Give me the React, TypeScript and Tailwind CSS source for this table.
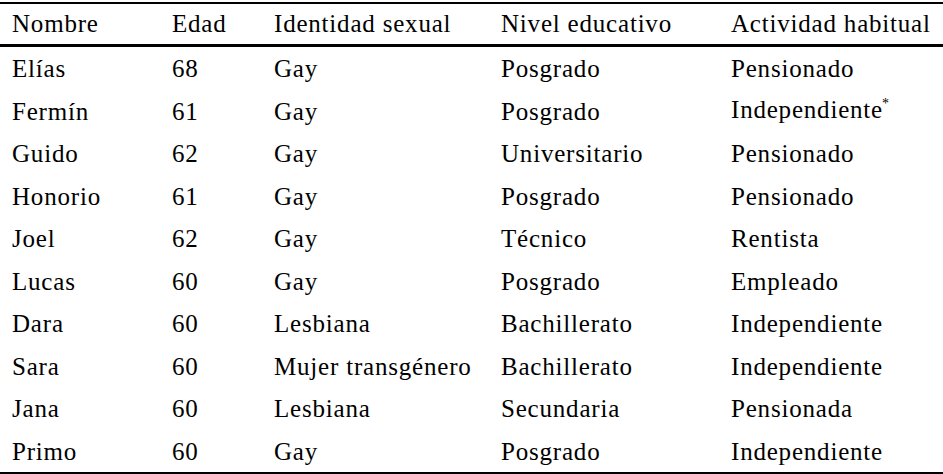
import React from "react";

const rows: [string, string, string, string, string, boolean?][] = [
  ["Elías", "68", "Gay", "Posgrado", "Pensionado"],
  ["Fermín", "61", "Gay", "Posgrado", "Independiente", true],
  ["Guido", "62", "Gay", "Universitario", "Pensionado"],
  ["Honorio", "61", "Gay", "Posgrado", "Pensionado"],
  ["Joel", "62", "Gay", "Técnico", "Rentista"],
  ["Lucas", "60", "Gay", "Posgrado", "Empleado"],
  ["Dara", "60", "Lesbiana", "Bachillerato", "Independiente"],
  ["Sara", "60", "Mujer transgénero", "Bachillerato", "Independiente"],
  ["Jana", "60", "Lesbiana", "Secundaria", "Pensionada"],
  ["Primo", "60", "Gay", "Posgrado", "Independiente"],
];

const headers = ["Nombre", "Edad", "Identidad sexual", "Nivel educativo", "Actividad habitual"];

export default function App() {
  return (
    <div className="w-[943px] h-[474px] bg-white pt-[2px] text-black font-['Liberation_Serif'] text-[25px] tracking-[0.8px] leading-[24px] overflow-hidden">
      <div className="flex flex-col">
        <div className="h-[2px] bg-black" />
        <div className="grid grid-cols-[160px_102px_227px_230px_1fr] items-center pl-[12px] h-[40px] whitespace-nowrap">
          {headers.map((h) => (
            <div key={h}>{h}</div>
          ))}
        </div>
        <div className="h-[3px] bg-black" />
        {rows.map((r) => (
          <div
            key={r[0]}
            className="grid grid-cols-[160px_102px_227px_230px_1fr] items-center pl-[12px] h-[42.5px] pt-[2px] whitespace-nowrap"
          >
            <div>{r[0]}</div>
            <div>{r[1]}</div>
            <div>{r[2]}</div>
            <div>{r[3]}</div>
            <div>
              {r[4]}
              {r[5] && (
                <span className="relative -top-[10px] -ml-[1px] text-[14px] tracking-normal">*</span>
              )}
            </div>
          </div>
        ))}
        <div className="h-[2px] bg-black" />
      </div>
    </div>
  );
}
